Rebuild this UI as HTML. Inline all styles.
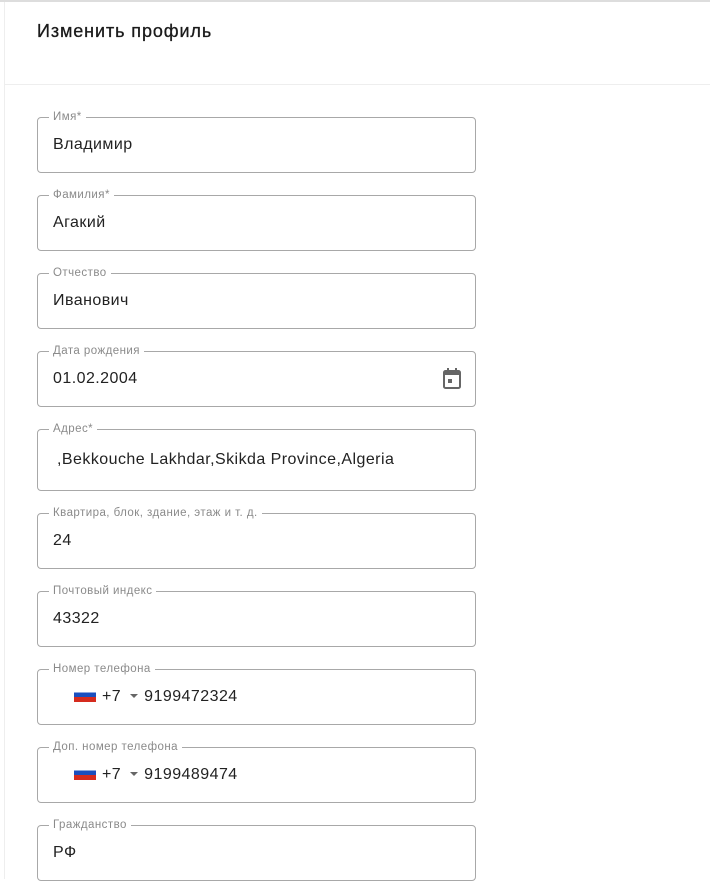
<!DOCTYPE html>
<html><head><meta charset="utf-8"><style>
body{margin:0;width:710px;height:879px;overflow:hidden;background:#fff;font-family:"Liberation Sans",sans-serif;position:relative}
.top{position:absolute;left:0;top:0;width:710px;height:2px;background:#ddd}
.lft{position:absolute;left:4px;top:2px;width:1px;height:877px;background:#eee}
.hd{position:absolute;left:5px;top:84px;width:705px;height:1px;background:#eee}
h1{position:absolute;left:37px;top:21px;margin:0;font-size:18px;font-weight:normal;color:#1a1a1a;letter-spacing:.9px;-webkit-text-stroke:.3px #1a1a1a}
.f{position:absolute;left:37px;width:437px;height:54px;border:1px solid #a8a8a8;border-radius:4px;box-sizing:content-box}
.f label{position:absolute;left:11px;top:-8px;background:#fff;padding:0 4px;font-size:11.5px;color:#8a8a8a;line-height:14px;letter-spacing:.45px}
.f .v{position:absolute;left:15px;top:17px;font-size:16px;color:#222;line-height:20px;letter-spacing:.45px}
.flag{display:inline-block;width:22px;height:14px;vertical-align:-1px;margin-right:6px;background:linear-gradient(#fff 0 33%,#1a4fbf 33% 66%,#d52b1e 66%)}
.car{display:inline-block;width:0;height:0;border-left:4px solid transparent;border-right:4px solid transparent;border-top:4px solid #666;margin:0 6px 0 9px;vertical-align:3px}
</style></head><body>
<div class="top"></div><div class="lft"></div><div class="hd"></div>
<h1>Изменить профиль</h1>
<div class="f" style="top:117px"><label>Имя*</label><div class="v">Владимир</div></div>
<div class="f" style="top:195px"><label>Фамилия*</label><div class="v">Агакий</div></div>
<div class="f" style="top:273px"><label>Отчество</label><div class="v">Иванович</div></div>
<div class="f" style="top:351px"><label>Дата рождения</label><div class="v">01.02.2004</div>
<svg style="position:absolute;left:404px;top:16px" width="20" height="22" viewBox="0 0 20 22"><rect x="2" y="3" width="16" height="17" rx="1.5" fill="none" stroke="#666" stroke-width="2"/><rect x="2" y="3" width="16" height="4" fill="#666"/><rect x="5" y="0" width="2" height="4" fill="#666"/><rect x="13" y="0" width="2" height="4" fill="#666"/><rect x="6" y="11" width="4" height="4" fill="#666"/></svg></div>
<div class="f" style="top:429px;height:60px"><label>Адрес*</label><div class="v" style="top:20px;left:19px">,Bekkouche Lakhdar,Skikda Province,Algeria</div></div>
<div class="f" style="top:513px"><label>Квартира, блок, здание, этаж и т. д.</label><div class="v">24</div></div>
<div class="f" style="top:591px"><label>Почтовый индекс</label><div class="v">43322</div></div>
<div class="f" style="top:669px"><label>Номер телефона</label><div class="v" style="left:36px"><span class="flag"></span>+7<span class="car"></span>9199472324</div></div>
<div class="f" style="top:747px"><label>Доп. номер телефона</label><div class="v" style="left:36px"><span class="flag"></span>+7<span class="car"></span>9199489474</div></div>
<div class="f" style="top:825px"><label>Гражданство</label><div class="v">РФ</div></div>
</body></html>
